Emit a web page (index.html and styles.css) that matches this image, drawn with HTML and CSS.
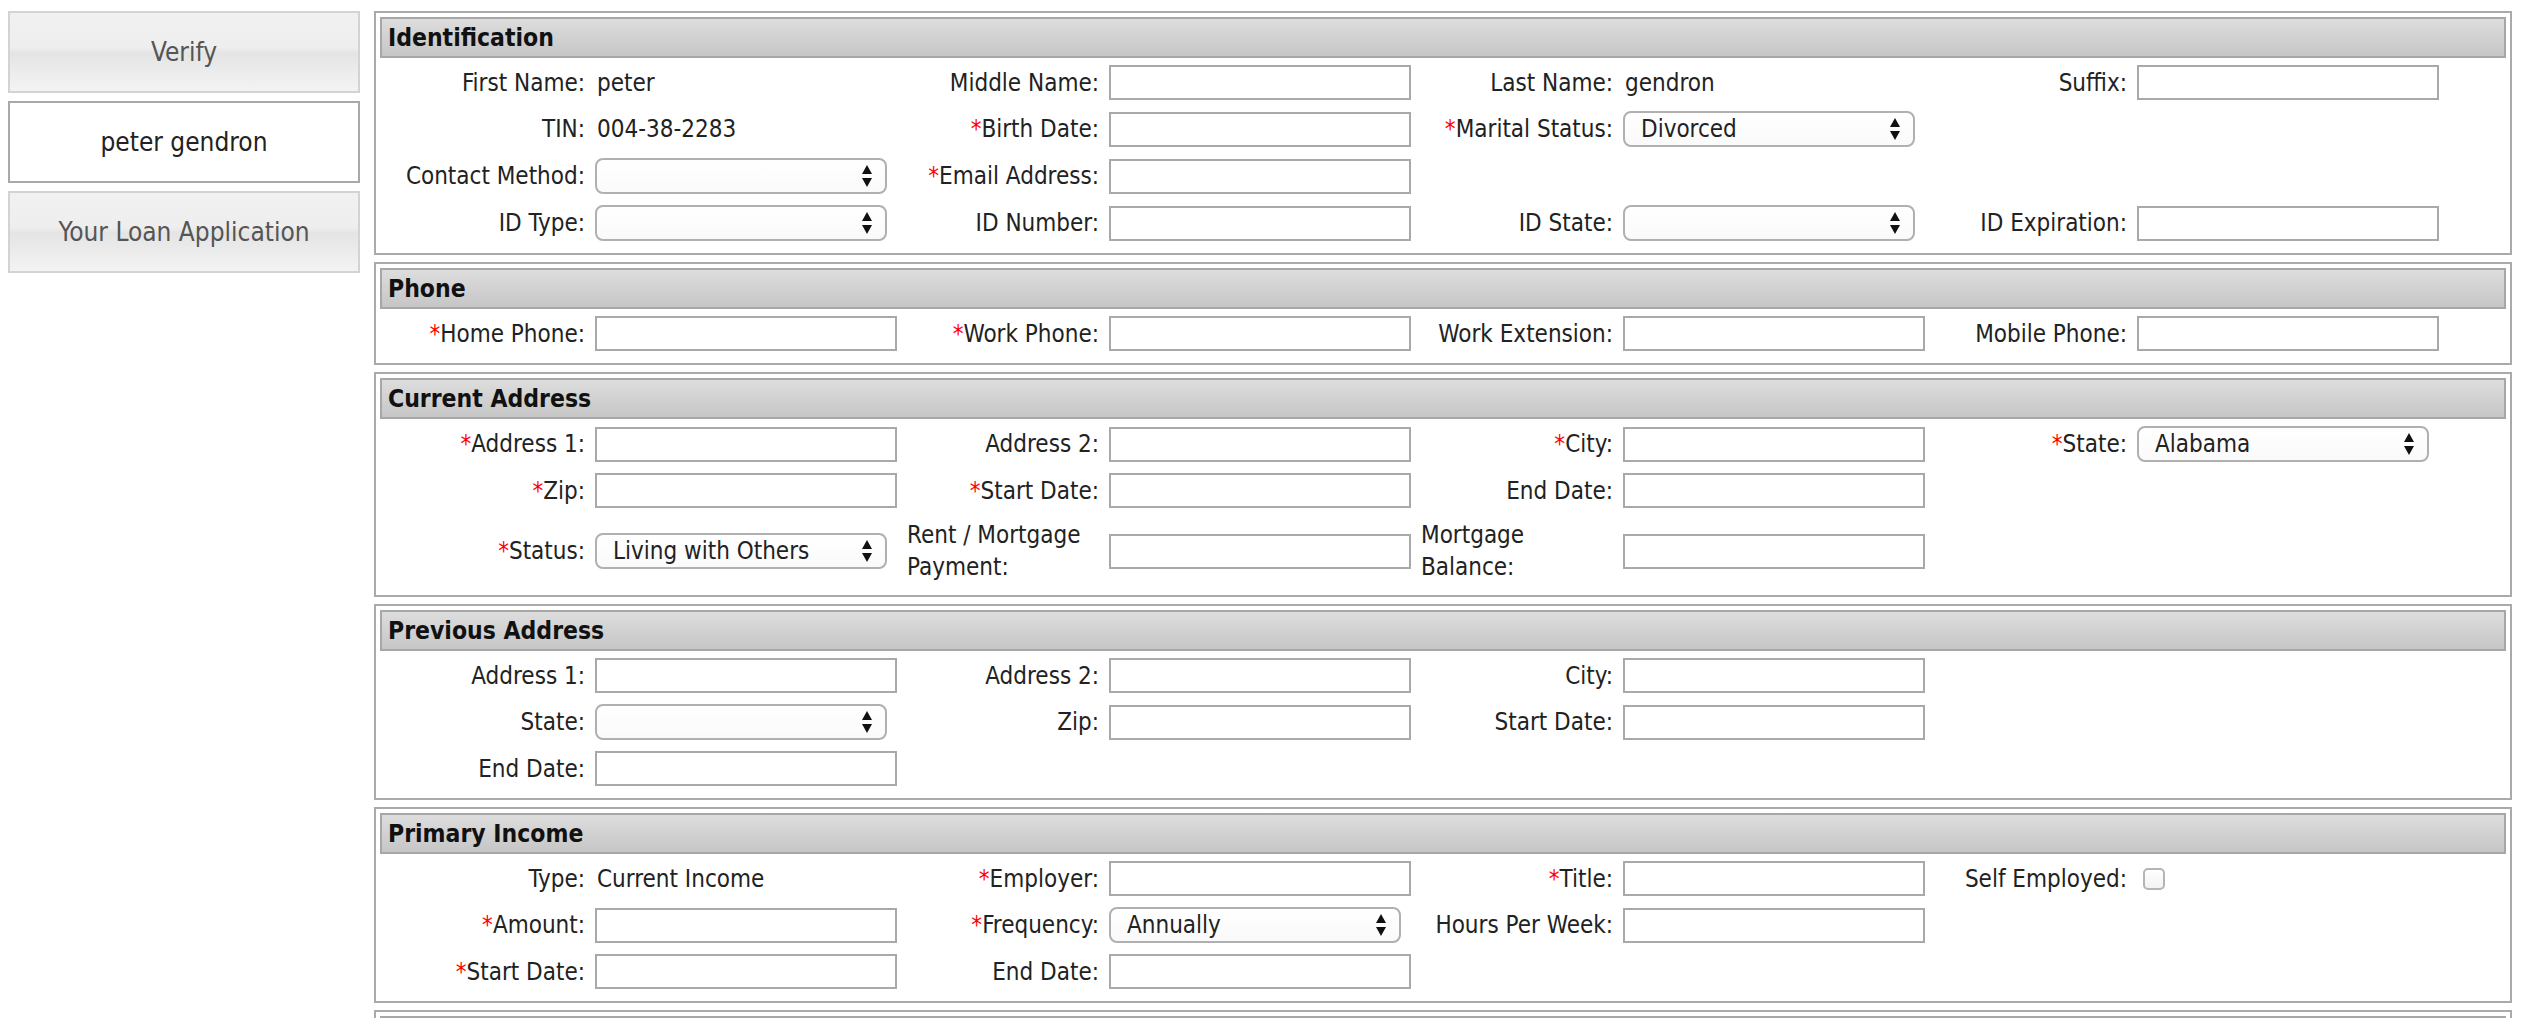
FILE: index.html
```html
<!DOCTYPE html>
<html>
<head>
<meta charset="utf-8">
<title>Loan Application</title>
<link rel="stylesheet" href="styles.css">
</head>
<body>
<div class="page">
  <nav class="sidebar">
    <div class="navbtn">Verify</div>
    <div class="navbtn active">peter gendron</div>
    <div class="navbtn">Your Loan Application</div>
  </nav>
  <main class="main">
    <section class="box">
      <div class="hdr">Identification</div>
      <div class="grid">
        <div class="lbl"><span>First Name:</span></div><div class="fld val">peter</div>
        <div class="lbl"><span>Middle Name:</span></div><div class="fld"><div class="inp"></div></div>
        <div class="lbl"><span>Last Name:</span></div><div class="fld val">gendron</div>
        <div class="lbl"><span>Suffix:</span></div><div class="fld"><div class="inp"></div></div>

        <div class="lbl"><span>TIN:</span></div><div class="fld val">004-38-2283</div>
        <div class="lbl"><span><i>*</i>Birth Date:</span></div><div class="fld"><div class="inp"></div></div>
        <div class="lbl"><span><i>*</i>Marital Status:</span></div><div class="fld"><div class="sel"><span>Divorced</span><svg class="arr" width="12" height="24" viewBox="0 0 12 24"><path d="M6 1 L11 10 H1 Z M6 23 L11 14 H1 Z" fill="#111"/></svg></div></div>
        <div class="lbl"></div><div class="fld"></div>

        <div class="lbl"><span>Contact Method:</span></div><div class="fld"><div class="sel"><span></span><svg class="arr" width="12" height="24" viewBox="0 0 12 24"><path d="M6 1 L11 10 H1 Z M6 23 L11 14 H1 Z" fill="#111"/></svg></div></div>
        <div class="lbl"><span><i>*</i>Email Address:</span></div><div class="fld"><div class="inp"></div></div>
        <div class="lbl"></div><div class="fld"></div>
        <div class="lbl"></div><div class="fld"></div>

        <div class="lbl"><span>ID Type:</span></div><div class="fld"><div class="sel"><span></span><svg class="arr" width="12" height="24" viewBox="0 0 12 24"><path d="M6 1 L11 10 H1 Z M6 23 L11 14 H1 Z" fill="#111"/></svg></div></div>
        <div class="lbl"><span>ID Number:</span></div><div class="fld"><div class="inp"></div></div>
        <div class="lbl"><span>ID State:</span></div><div class="fld"><div class="sel"><span></span><svg class="arr" width="12" height="24" viewBox="0 0 12 24"><path d="M6 1 L11 10 H1 Z M6 23 L11 14 H1 Z" fill="#111"/></svg></div></div>
        <div class="lbl"><span>ID Expiration:</span></div><div class="fld"><div class="inp"></div></div>
      </div>
    </section>

    <section class="box">
      <div class="hdr">Phone</div>
      <div class="grid">
        <div class="lbl"><span><i>*</i>Home Phone:</span></div><div class="fld"><div class="inp"></div></div>
        <div class="lbl"><span><i>*</i>Work Phone:</span></div><div class="fld"><div class="inp"></div></div>
        <div class="lbl"><span>Work Extension:</span></div><div class="fld"><div class="inp"></div></div>
        <div class="lbl"><span>Mobile Phone:</span></div><div class="fld"><div class="inp"></div></div>
      </div>
    </section>

    <section class="box">
      <div class="hdr">Current Address</div>
      <div class="grid">
        <div class="lbl"><span><i>*</i>Address 1:</span></div><div class="fld"><div class="inp"></div></div>
        <div class="lbl"><span>Address 2:</span></div><div class="fld"><div class="inp"></div></div>
        <div class="lbl"><span><i>*</i>City:</span></div><div class="fld"><div class="inp"></div></div>
        <div class="lbl"><span><i>*</i>State:</span></div><div class="fld"><div class="sel"><span>Alabama</span><svg class="arr" width="12" height="24" viewBox="0 0 12 24"><path d="M6 1 L11 10 H1 Z M6 23 L11 14 H1 Z" fill="#111"/></svg></div></div>

        <div class="lbl"><span><i>*</i>Zip:</span></div><div class="fld"><div class="inp"></div></div>
        <div class="lbl"><span><i>*</i>Start Date:</span></div><div class="fld"><div class="inp"></div></div>
        <div class="lbl"><span>End Date:</span></div><div class="fld"><div class="inp"></div></div>
        <div class="lbl"></div><div class="fld"></div>

        <div class="lbl"><span><i>*</i>Status:</span></div><div class="fld"><div class="sel"><span>Living with Others</span><svg class="arr" width="12" height="24" viewBox="0 0 12 24"><path d="M6 1 L11 10 H1 Z M6 23 L11 14 H1 Z" fill="#111"/></svg></div></div>
        <div class="lbl"><span>Rent / Mortgage Payment:</span></div><div class="fld"><div class="inp"></div></div>
        <div class="lbl"><span>Mortgage Balance:</span></div><div class="fld"><div class="inp"></div></div>
        <div class="lbl"></div><div class="fld"></div>
      </div>
    </section>

    <section class="box">
      <div class="hdr">Previous Address</div>
      <div class="grid">
        <div class="lbl"><span>Address 1:</span></div><div class="fld"><div class="inp"></div></div>
        <div class="lbl"><span>Address 2:</span></div><div class="fld"><div class="inp"></div></div>
        <div class="lbl"><span>City:</span></div><div class="fld"><div class="inp"></div></div>
        <div class="lbl"></div><div class="fld"></div>

        <div class="lbl"><span>State:</span></div><div class="fld"><div class="sel"><span></span><svg class="arr" width="12" height="24" viewBox="0 0 12 24"><path d="M6 1 L11 10 H1 Z M6 23 L11 14 H1 Z" fill="#111"/></svg></div></div>
        <div class="lbl"><span>Zip:</span></div><div class="fld"><div class="inp"></div></div>
        <div class="lbl"><span>Start Date:</span></div><div class="fld"><div class="inp"></div></div>
        <div class="lbl"></div><div class="fld"></div>

        <div class="lbl"><span>End Date:</span></div><div class="fld"><div class="inp"></div></div>
        <div class="lbl"></div><div class="fld"></div>
        <div class="lbl"></div><div class="fld"></div>
        <div class="lbl"></div><div class="fld"></div>
      </div>
    </section>

    <section class="box">
      <div class="hdr">Primary Income</div>
      <div class="grid">
        <div class="lbl"><span>Type:</span></div><div class="fld val">Current Income</div>
        <div class="lbl"><span><i>*</i>Employer:</span></div><div class="fld"><div class="inp"></div></div>
        <div class="lbl"><span><i>*</i>Title:</span></div><div class="fld"><div class="inp"></div></div>
        <div class="lbl"><span>Self Employed:</span></div><div class="fld"><div class="chk"></div></div>

        <div class="lbl"><span><i>*</i>Amount:</span></div><div class="fld"><div class="inp"></div></div>
        <div class="lbl"><span><i>*</i>Frequency:</span></div><div class="fld"><div class="sel"><span>Annually</span><svg class="arr" width="12" height="24" viewBox="0 0 12 24"><path d="M6 1 L11 10 H1 Z M6 23 L11 14 H1 Z" fill="#111"/></svg></div></div>
        <div class="lbl"><span>Hours Per Week:</span></div><div class="fld"><div class="inp"></div></div>
        <div class="lbl"></div><div class="fld"></div>

        <div class="lbl"><span><i>*</i>Start Date:</span></div><div class="fld"><div class="inp"></div></div>
        <div class="lbl"><span>End Date:</span></div><div class="fld"><div class="inp"></div></div>
        <div class="lbl"></div><div class="fld"></div>
        <div class="lbl"></div><div class="fld"></div>
      </div>
    </section>

    <section class="box">
      <div class="hdr"></div>
      <div class="grid"></div>
    </section>
  </main>
</div>
</body>
</html>
```

FILE: styles.css
```css
html, body {
  margin: 0;
  padding: 0;
  background: #fff;
}
body {
  font-family: "DejaVu Sans Condensed", "DejaVu Sans", sans-serif;
  font-stretch: condensed;
  font-size: 26px;
  color: #222;
  height: 1018px;
  overflow: hidden;
}
.page {
  display: flex;
  align-items: flex-start;
  gap: 14px;
  padding: 11px 10px 0 8px;
}
.sidebar {
  width: 352px;
  flex: none;
  display: flex;
  flex-direction: column;
  gap: 8px;
}
.navbtn {
  height: 78px;
  border: 2px solid #d3d3d3;
  background: linear-gradient(#f1f1f1 0%, #eeeeee 44%, #e4e4e4 52%, #ebebeb 72%, #f3f3f3 100%);
  color: #555;
  display: flex;
  align-items: center;
  justify-content: center;
}
.navbtn.active {
  background: #fff;
  border-color: #a9a9a9;
  color: #222;
}
.main {
  flex: 1;
  min-width: 0;
  font-size: 24px;
}
.box {
  border: 2px solid #aaa;
  padding: 4px;
  margin-bottom: 7px;
}
.hdr {
  height: 37px;
  line-height: 37px;
  border: 2px solid #a7a7a7;
  background: linear-gradient(#dddddd, #c6c6c6);
  font-weight: bold;
  font-size: 24.5px;
  color: #111;
  padding-left: 6px;
}
.grid {
  display: grid;
  grid-template-columns: repeat(4, 202px 312px);
  row-gap: 11px;
  align-items: center;
  padding: 7px 0 8px 13px;
}
.lbl {
  text-align: right;
  padding-right: 10px;
}
.lbl span {
  display: inline-block;
  text-align: left;
  line-height: 32px;
  vertical-align: middle;
}
.lbl i {
  font-style: normal;
  color: #f00;
}
.fld {
  min-height: 35px;
  display: flex;
  align-items: center;
}
.fld.val {
  padding-left: 2px;
}
.inp {
  width: 298px;
  height: 31px;
  border: 2px solid #a9a9a9;
  background: #fff;
}
.sel {
  box-sizing: border-box;
  width: 292px;
  height: 36px;
  border: 2px solid #b0b0b0;
  border-radius: 8px;
  background: linear-gradient(#ffffff, #fafafa);
  display: flex;
  align-items: center;
  justify-content: space-between;
  padding: 0 12px 0 16px;
  color: #222;
}
.arr {
  display: block;
  flex: none;
}
.chk {
  box-sizing: border-box;
  width: 22px;
  height: 22px;
  margin-left: 6px;
  border: 2px solid #b5b5b5;
  border-radius: 5px;
  background: linear-gradient(#ffffff, #f2f2f2);
}
```
